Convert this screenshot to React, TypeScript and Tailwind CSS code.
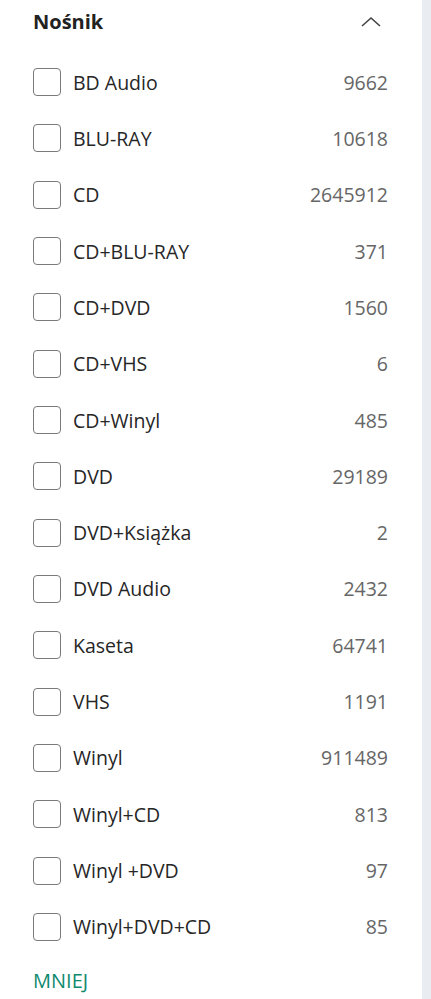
import React from 'react'

const items: [string, number][] = [
  ['BD Audio', 9662],
  ['BLU-RAY', 10618],
  ['CD', 2645912],
  ['CD+BLU-RAY', 371],
  ['CD+DVD', 1560],
  ['CD+VHS', 6],
  ['CD+Winyl', 485],
  ['DVD', 29189],
  ['DVD+Książka', 2],
  ['DVD Audio', 2432],
  ['Kaseta', 64741],
  ['VHS', 1191],
  ['Winyl', 911489],
  ['Winyl+CD', 813],
  ['Winyl +DVD', 97],
  ['Winyl+DVD+CD', 85],
]

const App: React.FC = () => {
  return (
    <div className="flex h-[999px] w-[431px] overflow-hidden bg-white font-['Open_Sans',sans-serif]">
      <div className="w-[422px] pl-[33px] pr-[34px]">
        <div className="flex h-[44px] items-center justify-between">
          <span className="text-[20px] font-bold text-[#222]">Nośnik</span>
          <svg width="22" height="14" viewBox="0 0 22 14" fill="none" className="mr-[6px]">
            <path d="M2 11 L11 3 L20 11" stroke="#444" strokeWidth="1.6" />
          </svg>
        </div>
        <div className="pt-[10px]">
          {items.map(([label, count]) => (
            <div key={label} className="flex h-[56.33px] items-center">
              <span className="h-[28px] w-[28px] rounded-[4px] border border-[#7a7a7a] bg-white" />
              <span className="ml-[12px] flex-1 text-[19.5px] text-[#262626]">{label}</span>
              <span className="text-[19.5px] text-[#666]">{count}</span>
            </div>
          ))}
        </div>
        <div className="flex h-[52px] items-center">
          <span className="text-[20px] text-[#0e8a6e]">MNIEJ</span>
        </div>
      </div>
      <div className="flex-1 bg-[#e9edf1]" />
    </div>
  )
}

export default App
